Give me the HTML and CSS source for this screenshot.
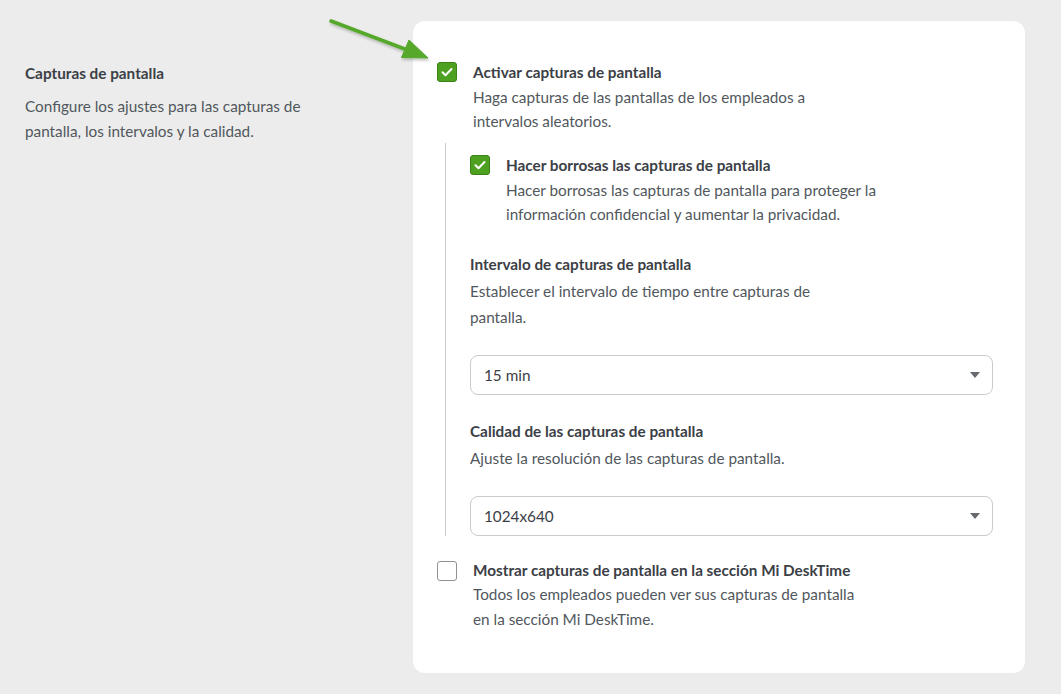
FILE: index.html
```html
<!DOCTYPE html>
<html lang="es">
  <head>
    <meta charset="UTF-8" />
    <meta name="viewport" content="width=device-width, initial-scale=1.0" />
    <title>Capturas de pantalla</title>
    <link rel="stylesheet" href="styles.css">
  </head>
  <body>
    <div class="page">
      <!-- section intro -->
      <div class="intro">
        <h3 class="intro-title">Capturas de pantalla</h3>
        <p class="intro-text">Configure los ajustes para las capturas de<br>pantalla, los intervalos y la calidad.</p>
      </div>

      <!-- settings card -->
      <div class="card">
        <label class="option">
          <span class="box checked">
            <svg viewBox="0 0 20 20" width="20" height="20"><path d="M5.5 10.2l3 3 6-6.2" fill="none" stroke="#fff" stroke-width="2" stroke-linecap="round" stroke-linejoin="round"/></svg>
          </span>
          <span class="option-body">
            <span class="option-title">Activar capturas de pantalla</span>
            <span class="option-text">Haga capturas de las pantallas de los empleados a<br>intervalos aleatorios.</span>
          </span>
        </label>

        <div class="nested">
          <label class="option">
            <span class="box checked">
              <svg viewBox="0 0 20 20" width="20" height="20"><path d="M5.5 10.2l3 3 6-6.2" fill="none" stroke="#fff" stroke-width="2" stroke-linecap="round" stroke-linejoin="round"/></svg>
            </span>
            <span class="option-body">
              <span class="option-title">Hacer borrosas las capturas de pantalla</span>
              <span class="option-text">Hacer borrosas las capturas de pantalla para proteger la<br>información confidencial y aumentar la privacidad.</span>
            </span>
          </label>

          <div class="field first">
            <div class="field-title">Intervalo de capturas de pantalla</div>
            <div class="field-text">Establecer el intervalo de tiempo entre capturas de<br>pantalla.</div>
            <div class="select">
              <span>15 min</span>
              <span class="caret"></span>
            </div>
          </div>

          <div class="field">
            <div class="field-title">Calidad de las capturas de pantalla</div>
            <div class="field-text">Ajuste la resolución de las capturas de pantalla.</div>
            <div class="select">
              <span>1024x640</span>
              <span class="caret"></span>
            </div>
          </div>
        </div>

        <label class="option last">
          <span class="box"></span>
          <span class="option-body">
            <span class="option-title">Mostrar capturas de pantalla en la sección Mi DeskTime</span>
            <span class="option-text">Todos los empleados pueden ver sus capturas de pantalla<br>en la sección Mi DeskTime.</span>
          </span>
        </label>
      </div>
    </div>

    <!-- annotation arrow -->
    <svg class="pointer" width="120" height="60" viewBox="325 12 120 60">
      <defs>
        <filter id="soft" x="-20%" y="-40%" width="140%" height="180%">
          <feDropShadow dx="1" dy="2" stdDeviation="1.5" flood-color="#000" flood-opacity="0.25"/>
        </filter>
      </defs>
      <g filter="url(#soft)" fill="#55a82b" stroke="#55a82b">
        <line x1="331" y1="21" x2="410" y2="51" stroke-width="3.5" stroke-linecap="round"/>
        <polygon points="428,58 401.5,57.5 409,40" stroke-width="1" stroke-linejoin="round"/>
      </g>
    </svg>
  </body>
</html>
```

FILE: styles.css
```css
body {
  margin: 0;
  background-color: #ebeceb;
  font-family: Lato, "Open Sans", sans-serif;
  font-size: 15.3px;
  color: #3b4046;
}

.page {
  display: flex;
  padding-top: 21px;
}

/* left intro */
.intro {
  width: 388px;
  padding: 40px 0 0 25px;
}
.intro-title {
  margin: 0 0 8px;
  font-size: 15.3px;
  line-height: 25px;
  font-weight: 700;
}
.intro-text {
  margin: 0;
  line-height: 25px;
  color: #51575d;
}

/* card */
.card {
  width: 556px;
  height: 613px;
  padding: 39px 32px 0 24px;
  background: #fff;
  border-radius: 12px;
}

.option {
  display: flex;
  gap: 16px;
  cursor: pointer;
}
.box {
  flex: none;
  width: 18px;
  height: 18px;
  margin-top: 2px;
  border: 1px solid #8d9297;
  border-radius: 3px;
  background: #fff;
  display: flex;
}
.box.checked {
  background: #4ea021;
  border-color: #3b8116;
}
.box svg {
  margin: -1px;
}
.option-body {
  display: flex;
  flex-direction: column;
  line-height: 24.5px;
}
.option-title {
  font-weight: 700;
}
.option-text {
  color: #51575d;
}
.option.last {
  margin-top: 22px;
}
.option.last .box {
  margin-top: 3px;
}

/* nested settings */
.nested {
  margin: 9.5px 0 0 8px;
  padding: 10px 0 0 24px;
  border-left: 1px solid #c9cbcd;
}

.field {
  margin-top: 24px;
}
.field.first {
  margin-top: 25px;
}
.field-title {
  font-weight: 700;
  line-height: 25px;
}
.field-text {
  margin-top: 1px;
  line-height: 26px;
  color: #51575d;
}

.select {
  margin-top: 25px;
  height: 38px;
  padding: 0 12px 0 13px;
  border: 1px solid #c9cbcd;
  border-radius: 8px;
  display: flex;
  align-items: center;
  justify-content: space-between;
}
.caret {
  width: 0;
  height: 0;
  border-left: 5px solid transparent;
  border-right: 5px solid transparent;
  border-top: 6px solid #666a6e;
}

.pointer {
  position: absolute;
  left: 325px;
  top: 12px;
}
```
